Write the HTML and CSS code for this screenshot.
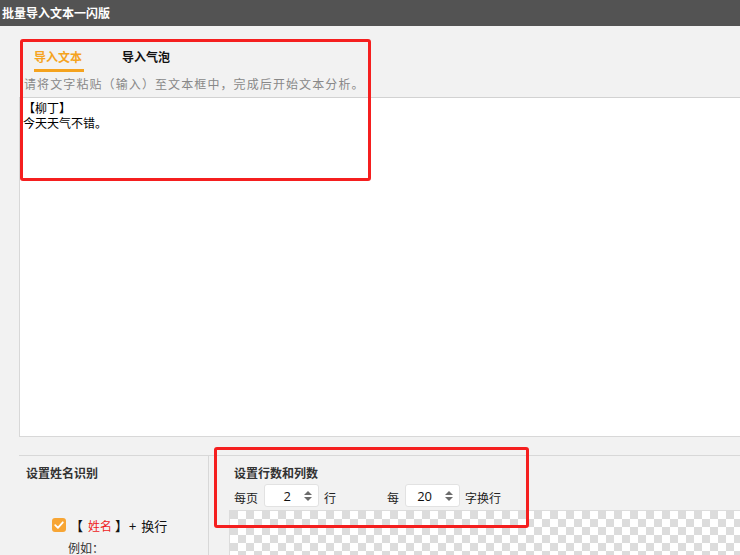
FILE: index.html
```html
<!DOCTYPE html>
<html lang="zh-CN">
<head>
  <meta charset="UTF-8">
  <title>批量导入文本一闪版</title>
  <link rel="stylesheet" href="styles.css">
</head>
<body>
  <div class="titlebar">批量导入文本一闪版</div>
  <div class="main">
    <div class="tabs">
      <div class="tab active">导入文本</div>
      <div class="tab">导入气泡</div>
    </div>
    <div class="hint">请将文字粘贴（输入）至文本框中，完成后开始文本分析。</div>
    <div class="editor">
      <div class="line">【柳丁】</div>
      <div class="line">今天天气不错。</div>
    </div>

    <div class="settings">
      <div class="name-col">
        <div class="sec-title">设置姓名识别</div>
        <div class="check-row">
          <span class="checkbox">
            <svg width="14" height="14" viewBox="0 0 14 14"><path d="M3.2 7.2 L5.9 9.8 L10.8 4.3" fill="none" stroke="#fff" stroke-width="1.8" stroke-linecap="round" stroke-linejoin="round"/></svg>
          </span>
          <span class="br">【</span>
          <span class="red">姓名</span>
          <span class="br close">】</span>
          <span class="plus">+</span>
          <span class="nl">换行</span>
        </div>
        <div class="example">例如：</div>
      </div>
      <div class="grid-col">
        <div class="sec-title">设置行数和列数</div>
        <div class="spin-row">
          <span class="lbl">每页</span>
          <div class="spin">
            <span class="val">2</span>
            <span class="arrows"><i class="up"></i><i class="down"></i></span>
          </div>
          <span class="lbl">行</span>
          <span class="spacer"></span>
          <span class="lbl">每</span>
          <div class="spin">
            <span class="val">20</span>
            <span class="arrows"><i class="up"></i><i class="down"></i></span>
          </div>
          <span class="lbl">字换行</span>
        </div>
        <div class="checker"></div>
      </div>
    </div>
  </div>

  <!-- annotation boxes -->
  <div class="mark mark-top"></div>
  <div class="mark mark-bottom"></div>
</body>
</html>
```

FILE: styles.css
```css
body {
  margin: 0;
  background-color: #f2f2f2;
  color: #222;
  font-family: "Noto Sans CJK SC", "Microsoft YaHei", sans-serif;
  font-size: 12px;
  width: 740px;
  height: 555px;
  overflow: hidden;
  position: relative;
}
.titlebar {
  height: 26px;
  line-height: 26px;
  background: #535353;
  color: #fff;
  font-weight: bold;
  padding-left: 2px;
}
.main {
  margin-left: 19px;
}
.tabs {
  display: flex;
  padding: 23px 0 0 15px;
}
.tab {
  line-height: 16px;
  padding-bottom: 4px;
  border-bottom: 3px solid transparent;
  font-weight: bold;
  color: #111;
}
.tab.active {
  width: 50px;
  color: #f5a31e;
  border-bottom-color: #f5a31e;
  margin-right: 38px;
}
.hint {
  margin-top: 4px;
  padding: 0 0 5px 5px;
  line-height: 16px;
  color: #888;
  letter-spacing: 1.1px;
}
.editor {
  background: #fff;
  border-top: 1px solid #d2d2d2;
  border-left: 1px solid #d8d8d8;
  border-bottom: 1px solid #d8d8d8;
  height: 334px;
  padding: 2px 3px;
  color: #000;
}
.line {
  height: 15px;
  line-height: 15px;
}
.settings {
  display: flex;
  margin-top: 18px;
  border-top: 1px solid #d8d8d8;
  height: 120px;
}
.sec-title {
  font-weight: bold;
  color: #333;
  line-height: 16px;
  padding-top: 9px;
}
.name-col {
  width: 190px;
  border-right: 1px solid #d8d8d8;
  padding-left: 7px;
  box-sizing: border-box;
  flex-shrink: 0;
}
.check-row {
  display: flex;
  align-items: center;
  margin-top: 36px;
  margin-left: 26px;
  height: 16px;
  color: #111;
  font-size: 13px;
}
.checkbox {
  width: 14px;
  height: 14px;
  border-radius: 3px;
  background: #f7a534;
  display: inline-flex;
  margin-right: 4px;
}
.red {
  color: #ee1c1c;
  margin-left: 5px;
  font-size: 12px;
}
.br.close {
  margin-left: 3px;
}
.plus {
  margin-left: 1px;
}
.nl {
  margin-left: 5px;
}
.example {
  margin: 7px 0 0 42px;
  line-height: 16px;
  color: #333;
}
.grid-col {
  flex: 1;
  padding-left: 25px;
}
.spin-row {
  display: flex;
  align-items: center;
  margin-top: 3px;
  height: 23px;
  color: #222;
}
.lbl {
  padding-top: 4px;
}
.spin {
  width: 55px;
  height: 23px;
  box-sizing: border-box;
  background: #fff;
  border: 1px solid #e2e2e2;
  border-radius: 3px;
  display: flex;
  align-items: center;
  margin: 0 5px 0 6px;
}
.val {
  width: 26px;
  text-align: right;
  font-size: 13px;
  font-family: "Open Sans", sans-serif;
  color: #111;
  padding-top: 1px;
}
.arrows {
  display: flex;
  flex-direction: column;
  margin-left: 13px;
  gap: 2px;
}
.arrows i {
  width: 0;
  height: 0;
  border-left: 4px solid transparent;
  border-right: 4px solid transparent;
}
.arrows .up {
  border-bottom: 4px solid #6c6c6c;
}
.arrows .down {
  border-top: 4px solid #6c6c6c;
}
.spacer {
  width: 51px;
}
.checker {
  margin: 3px 0 0 -5px;
  height: 60px;
  border-top: 1px solid #dcdcdc;
  border-left: 1px solid #dcdcdc;
  background: repeating-conic-gradient(#fff 0 25%, #dcdcdc 0 50%) 0 0 / 16px 16px;
}
.mark {
  position: absolute;
  border: 3px solid #f51f1f;
  border-radius: 3px;
  box-sizing: border-box;
}
.mark-top {
  left: 20px;
  top: 39px;
  width: 351px;
  height: 142px;
}
.mark-bottom {
  left: 214px;
  top: 447px;
  width: 315px;
  height: 81px;
}
```
